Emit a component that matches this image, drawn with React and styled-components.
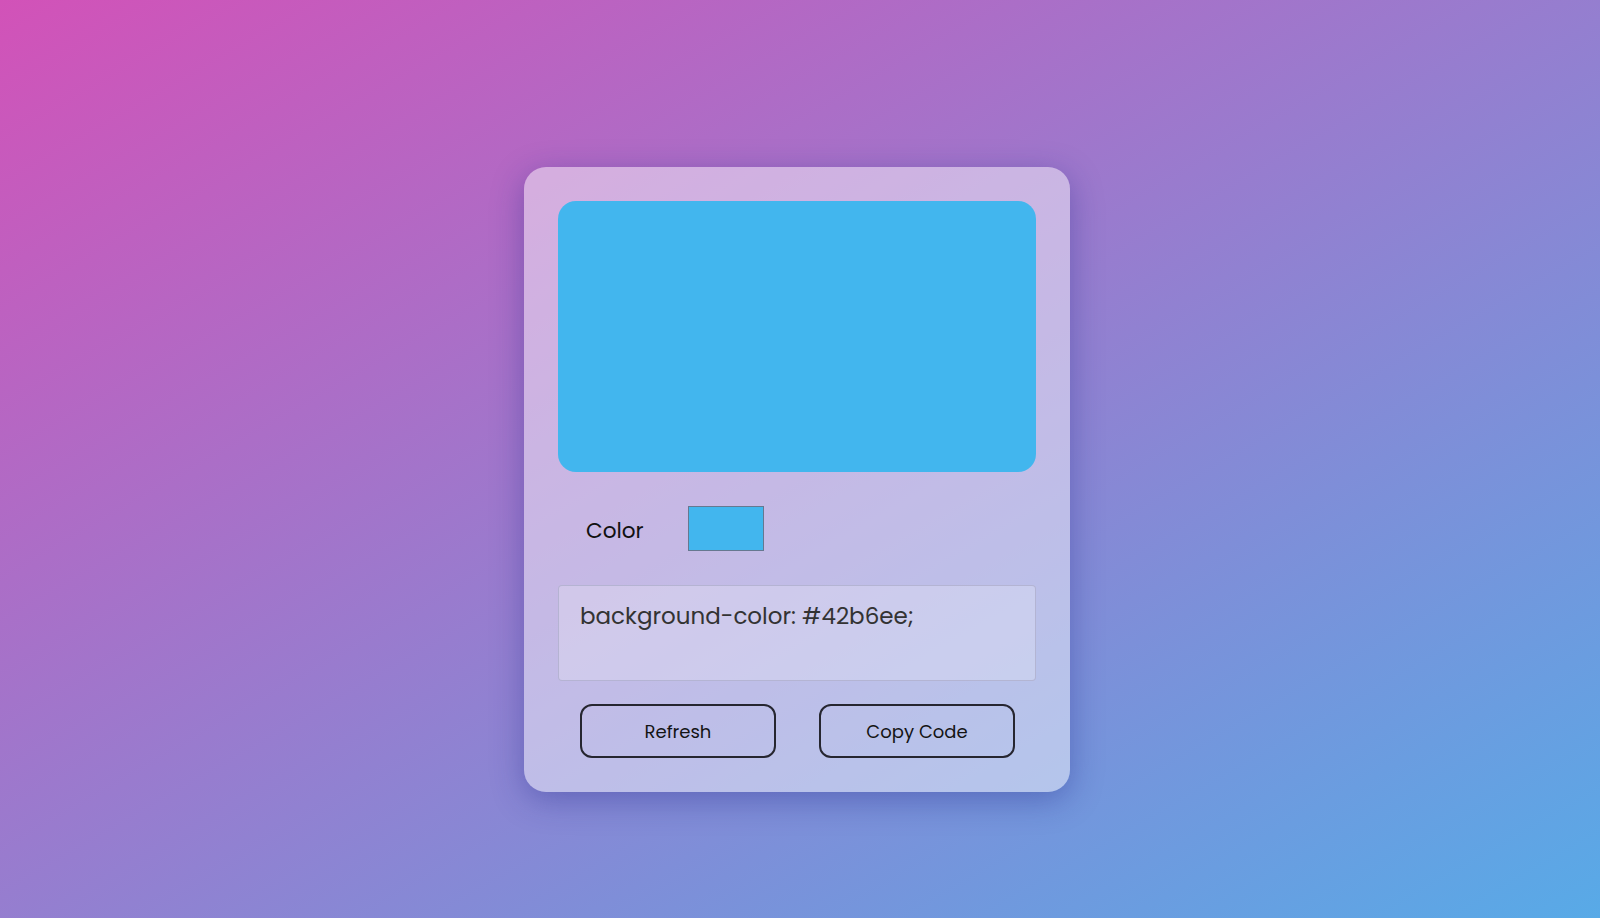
import React, { useState } from "react";
import styled, { createGlobalStyle } from "styled-components";

const Global = createGlobalStyle`
  html, body { margin: 0; padding: 0; }
  body {
    font-family: "Poppins", "Inter", "Noto Sans", sans-serif;
  }
  * { box-sizing: border-box; }
`;

const Page = styled.div`
  width: 100%;
  height: 918px;
  background: linear-gradient(to bottom right, #d252b8, #58aae7);
  display: flex;
  align-items: flex-start;
  justify-content: center;
  padding-top: 167px;
`;

const Card = styled.div`
  width: 546px;
  padding: 34px;
  border-radius: 22px;
  background: rgba(255, 255, 255, 0.46);
  box-shadow: 0 8px 32px 0 rgba(31, 38, 135, 0.37);
  display: flex;
  flex-direction: column;
  margin-left: -6px;
`;

const Preview = styled.div`
  height: 271px;
  border-radius: 18px;
  background: ${(p) => p.$color};
`;

const ColorRow = styled.div`
  display: flex;
  align-items: center;
  gap: 44px;
  padding-left: 28px;
  margin-top: 34px;
  height: 45px;
`;

const Label = styled.label`
  font-size: 21.6px;
  color: #111;
  padding-top: 4px;
`;

const Swatch = styled.div`
  width: 76px;
  height: 45px;
  border: 1px solid #667890;
  background: ${(p) => p.$color};
`;

const Code = styled.div`
  margin-top: 34px;
  height: 96px;
  border: 1px solid rgba(170, 170, 200, 0.7);
  border-radius: 4px;
  background: rgba(255, 255, 255, 0.22);
  padding: 14px 20px 14px 21px;
  font-size: 23px;
  color: #333;
  line-height: 32px;
`;

const Buttons = styled.div`
  display: flex;
  gap: 43px;
  padding-left: 22px;
  margin-top: 23px;
`;

const Button = styled.button`
  width: 196px;
  height: 54px;
  border: 2.5px solid #262630;
  border-radius: 12px;
  background: transparent;
  font-family: inherit;
  font-size: 18px;
  color: #141414;
  cursor: pointer;
`;

export default function App() {
  const [color] = useState("#42b6ee");
  return (
    <>
      <Global />
      <Page>
        <Card>
          <Preview $color={color} />
          <ColorRow>
            <Label>Color</Label>
            <Swatch $color={color} />
          </ColorRow>
          <Code>background-color: {color};</Code>
          <Buttons>
            <Button>Refresh</Button>
            <Button>Copy Code</Button>
          </Buttons>
        </Card>
      </Page>
    </>
  );
}
